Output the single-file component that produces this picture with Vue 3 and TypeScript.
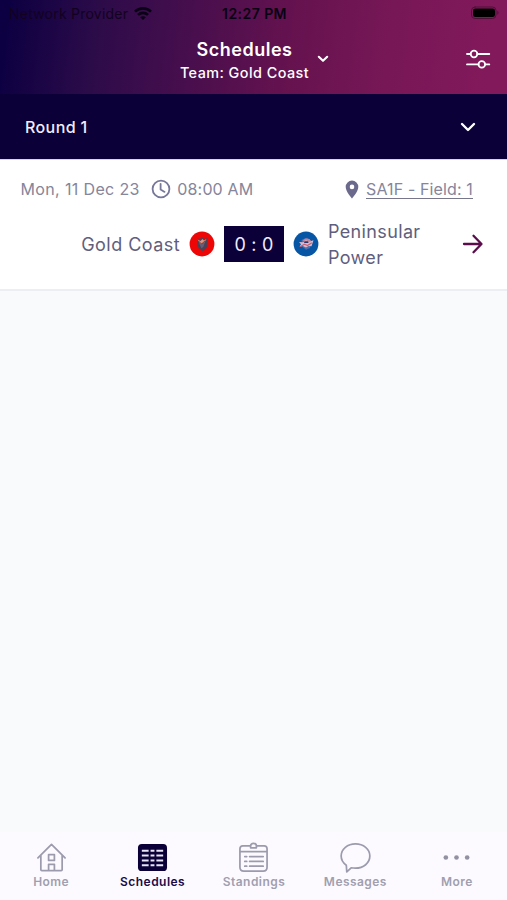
<script setup lang="ts">
import { ref } from 'vue'

type TabId = 'home' | 'schedules' | 'standings' | 'messages' | 'more'

interface Tab {
  id: TabId
  label: string
}

interface Match {
  date: string
  time: string
  venue: string
  home: string
  away: string
  score: string
}

const tabs: Tab[] = [
  { id: 'home', label: 'Home' },
  { id: 'schedules', label: 'Schedules' },
  { id: 'standings', label: 'Standings' },
  { id: 'messages', label: 'Messages' },
  { id: 'more', label: 'More' },
]

const matches: Match[] = [
  {
    date: 'Mon, 11 Dec 23',
    time: '08:00 AM',
    venue: 'SA1F - Field: 1',
    home: 'Gold Coast',
    away: 'Peninsular Power',
    score: '0 : 0',
  },
]

const active = ref<TabId>('schedules')
</script>

<template>
  <div class="screen">
    <header class="header">
      <div class="status">
        <div class="carrier">
          <span>Network Provider</span>
          <svg class="wifi" width="20" height="15" viewBox="0 0 20 15">
            <path d="M2 5.6C6.4 1.3 13.6 1.3 18 5.6" />
            <path d="M5 8.9c2.8-2.7 7.2-2.7 10 0" />
            <path class="wifi-dot" d="M7.2 11.2c1.6-1.4 4-1.4 5.6 0L10 14z" />
          </svg>
        </div>
        <span class="clock">12:27 PM</span>
        <svg class="battery" width="29" height="14" viewBox="0 0 29 14">
          <rect class="battery-case" x=".5" y="1" width="24.5" height="11.5" rx="3.5" />
          <rect x="2" y="2.5" width="22" height="8.5" rx="2.3" />
          <path class="battery-tip" d="M26.3 4.8c1.6.6 1.6 3.4 0 4z" />
        </svg>
      </div>
      <div class="titlebar">
        <div class="titles">
          <h1 class="title">Schedules</h1>
          <p class="team">Team: Gold Coast</p>
        </div>
        <svg class="title-chevron" width="12" height="8" viewBox="0 0 12 8"><path d="M1.8 1.8 6 5.8l4.2-4" /></svg>
        <svg class="filter" width="26" height="22" viewBox="0 0 26 22">
          <path d="M2 6h3.700M12.300 6h12M2 16.400h11.500M20.100 16.400h4.200" />
          <circle cx="9" cy="6" r="3.3" />
          <circle cx="16.8" cy="16.4" r="3.3" />
        </svg>
      </div>
    </header>

    <div class="round">
      <span>Round 1</span>
      <svg width="16" height="11" viewBox="0 0 16 11"><path d="m2 2 6 6 6-6" /></svg>
    </div>

    <article v-for="match in matches" :key="match.date" class="match">
      <div class="meta">
        <span class="date">{{ match.date }}</span>
        <svg class="time-icon" width="20" height="20" viewBox="0 0 20 20">
          <circle cx="10" cy="10" r="8.4" />
          <path d="M9.600 4.800v5.700l4 2.400" />
        </svg>
        <span class="time">{{ match.time }}</span>
        <svg class="pin" width="14" height="19" viewBox="0 0 14 19">
          <path fill-rule="evenodd" d="M7 .6A6.300 6.300 0 0 0 .7 6.900C.7 11.500 7 18.400 7 18.400s6.300-6.900 6.300-11.500A6.300 6.300 0 0 0 7 .6Zm0 4a2.300 2.300 0 1 1 0 4.600 2.300 2.300 0 0 1 0-4.600Z" />
        </svg>
        <span class="venue">{{ match.venue }}</span>
      </div>
      <div class="fixture">
        <span class="name home">{{ match.home }}</span>
        <svg class="crest" width="26" height="26" viewBox="0 0 26 26">
          <circle cx="13" cy="13" r="12.4" fill="#ee0505" />
          <path d="M8 7.500 10.500 8 13 6.500l2.500 1.500 3-1-.4 8.500c-.6 2.500-2.800 3.500-4.600 4.500-3-1.500-4.500-3-5-5.500z" fill="#4d4155" />
          <path d="m8.500 8.500 3 1.500 2-2 1.500 1.500 2.500-1.500-2 3.500-4 1.500z" fill="#d99683" />
          <path d="m10 12 3 1 3-2-1.500 4.500-2 2z" fill="#685e78" />
          <path d="m9.500 10 3 3 3.500-3" fill="none" stroke="#9c332f" />
        </svg>
        <span class="score">{{ match.score }}</span>
        <svg class="crest" width="26" height="26" viewBox="0 0 26 26">
          <circle cx="13" cy="13" r="12.4" fill="#0755a5" />
          <path d="m8.500 9 3-1.500L14 6.800l4 2.700-1 7.500-4 1.800-3.500-3z" fill="#526eae" />
          <path d="m9.500 9.500 3-2 4 .5 1.500 2-3 1.500z" fill="#c98392" />
          <path d="m6 11 4 .3 3-2 3 1.500 4.500-1.500-2 6-3-.3-2.500 1.500-3-1.500-3.500.6 1.500-2.400z" fill="#dcb9c8" />
          <path d="m7.500 15.500 4-2.200 3 1.200 4-2.500" fill="none" stroke="#c65c70" stroke-width="1.1" />
          <path d="M12 11.200h2.600" stroke="#26356f" stroke-width="1.800" />
        </svg>
        <span class="name away">{{ match.away }}</span>
        <svg class="arrow" width="22" height="20" viewBox="0 0 22 20"><path d="M2 10h17M11.500 1.800 19.500 10l-8 8.200" /></svg>
      </div>
    </article>

    <main class="empty"></main>

    <nav class="tabs">
      <button
        v-for="tab in tabs"
        :key="tab.id"
        class="tab"
        :class="{ active: tab.id === active }"
        type="button"
        @click="active = tab.id"
      >
        <svg v-if="tab.id === 'home'" class="icon" viewBox="0 0 32 32">
          <path d="M2 16.500 16 2.500l14 14M5 14v14.500q0 1 1 1h20q1 0 1-1V14M13 13h6v6h-6zM13 29v-6h6v6" />
        </svg>
        <svg v-else-if="tab.id === 'schedules'" class="icon solid" viewBox="0 0 32 32">
          <rect x="1" y="2" width="30" height="28" rx="4" />
          <path d="M5 9h7M14 9h4M20 9h7M5 14h7M14 14h4M20 14h7M5 19h7M14 19h4M20 19h7M5 24h7M14 24h4M20 24h7" />
        </svg>
        <svg v-else-if="tab.id === 'standings'" class="icon" viewBox="0 0 32 32">
          <path d="M13 4H5Q2 4 2 7v19q0 4 4 4h20q4 0 4-4V7q0-3-3-3h-8M2 10h28M13 6V4q0-2.500 3-2.500T19 4v2zM7 15h2M7 20h2M7 25h2M12 15h14M12 20h14M12 25h14" />
        </svg>
        <svg v-else-if="tab.id === 'messages'" class="icon" viewBox="0 0 32 32">
          <path d="M6.500 24C3 21.500 1.200 18 1.200 14.500 1.200 7.300 7.800 2 16 2s14.800 5.300 14.800 12.500S24.200 27 16 27c-1.500 0-3-.1-4.500-.4L7 30.800z" />
        </svg>
        <svg v-else class="icon dots" viewBox="0 0 32 32">
          <circle cx="5" cy="16" r="2.4" />
          <circle cx="16" cy="16" r="2.4" />
          <circle cx="27" cy="16" r="2.4" />
        </svg>
        <span>{{ tab.label }}</span>
      </button>
    </nav>
  </div>
</template>

<style>
body {
  margin: 0;
}
</style>

<style scoped>
.screen {
  display: flex;
  flex-direction: column;
  height: 900px;
  overflow: hidden;
  background: #f8fafc;
  font-family: Inter, "Liberation Sans", sans-serif;
  white-space: nowrap;
}

svg {
  display: block;
  flex: none;
  fill: none;
  stroke-linecap: round;
  stroke-linejoin: round;
}

.header {
  height: 94px;
  background: linear-gradient(97deg, #0d0042 2%, #2c0b49 19%, #480e4d 38%, #64124f 56%, #771756 76%, #82195b 96%);
}

.status {
  display: grid;
  grid-template-columns: 1fr auto 1fr;
  align-items: center;
  height: 26px;
  padding: 0 7px 0 9px;
  color: #080213;
  font-size: 14px;
}

.carrier {
  display: flex;
  align-items: center;
  gap: 5px;
  color: #12021f;
  letter-spacing: 0.23px;
}

.wifi {
  stroke: #0a0216;
  stroke-width: 2.6;
  stroke-linecap: butt;
}

.wifi-dot {
  fill: #0a0216;
  stroke: none;
}

.clock {
  font-weight: 600;
  letter-spacing: 0.45px;
}

.battery {
  justify-self: end;
  fill: #000;
}

.battery-case {
  fill: none;
  stroke: #4f1039;
}

.battery-tip {
  fill: #4f1039;
}

.titlebar {
  display: grid;
  grid-template-columns: 180px 129px 28px 1fr;
  align-items: center;
  padding: 12px 16px 0 0;
  color: #fff;
}

.titles {
  grid-column: 2;
  text-align: center;
}

.title,
.team {
  display: flex;
  justify-content: center;
  margin: 0;
}

.title {
  font-size: 18px;
  font-weight: 600;
  line-height: 24px;
  letter-spacing: 0.5px;
}

.team {
  font-size: 14.4px;
  font-weight: 500;
  line-height: 22px;
  letter-spacing: 0.45px;
}

.title-chevron,
.filter {
  margin-bottom: 4px;
  stroke: #fff;
}

.title-chevron {
  justify-self: center;
  stroke-width: 2.1;
}

.filter {
  justify-self: end;
  stroke-width: 1.8;
}

.round {
  display: flex;
  align-items: center;
  justify-content: space-between;
  box-sizing: border-box;
  height: 66px;
  padding: 0 31px 0 25px;
  border-bottom: 1px solid #d9d5e9;
  background: #0b0038;
  color: #f1edff;
  font-size: 16px;
  font-weight: 500;
  letter-spacing: 0.4px;
}

.round svg {
  margin-top: 2px;
  stroke: #fff;
  stroke-width: 2.4;
}

.match {
  box-sizing: border-box;
  height: 131px;
  padding: 17px 0 0;
  border-bottom: 2px solid #eceef2;
  background: #fff;
}

.meta {
  display: flex;
  align-items: center;
  height: 24px;
  padding: 0 34px 0 20.500px;
  color: #85859b;
  font-size: 16px;
}

.date {
  letter-spacing: 0.36px;
}

.time {
  letter-spacing: 0.15px;
}

.time-icon {
  margin: 0 6px 0 11.500px;
  stroke: #77779a;
  stroke-width: 1.8;
}

.pin {
  margin: 0 7px 0 auto;
  fill: #6c6a8c;
}

.venue {
  margin-top: 1px;
  border-bottom: 1px solid #77778c;
  line-height: 18px;
  letter-spacing: 0.13px;
}

.fixture {
  display: grid;
  grid-template-columns: 180px 26px 60px 26px 1fr 22px;
  column-gap: 9px;
  align-items: center;
  height: 54px;
  margin-top: 16px;
  padding-right: 23px;
  color: #5f5e7e;
  font-size: 18px;
  line-height: 26px;
  letter-spacing: 0.45px;
}

.name {
  padding-top: 2px;
}

.home {
  text-align: right;
}

.away {
  width: 110px;
  letter-spacing: 0.36px;
  white-space: normal;
}

.score {
  height: 36px;
  background: #0b0038;
  color: #f1edff;
  line-height: 37px;
  letter-spacing: 0.2px;
  text-align: center;
}

.arrow {
  stroke: #5b0c4d;
  stroke-width: 2.3;
}

.empty {
  flex: 1;
}

.tabs {
  display: grid;
  grid-template-columns: repeat(5, 1fr);
  height: 68px;
  background: #fdfaff;
}

.tab {
  display: flex;
  flex-direction: column;
  align-items: center;
  min-width: 0;
  padding: 10px 0 0 1px;
  border: 0;
  background: none;
  color: #a09faf;
  font: 600 12px/17px Inter, sans-serif;
  letter-spacing: 0.45px;
}

.icon {
  width: 31px;
  height: 31px;
  stroke: #9c9bae;
  stroke-width: 1.8;
}

.solid {
  fill: #0b0038;
  stroke: #e9e5f4;
  stroke-width: 2;
  stroke-linecap: butt;
}

.solid rect {
  stroke: none;
}

.dots {
  fill: #9291a2;
  stroke: none;
}

.active {
  color: #1b0b47;
}
</style>
